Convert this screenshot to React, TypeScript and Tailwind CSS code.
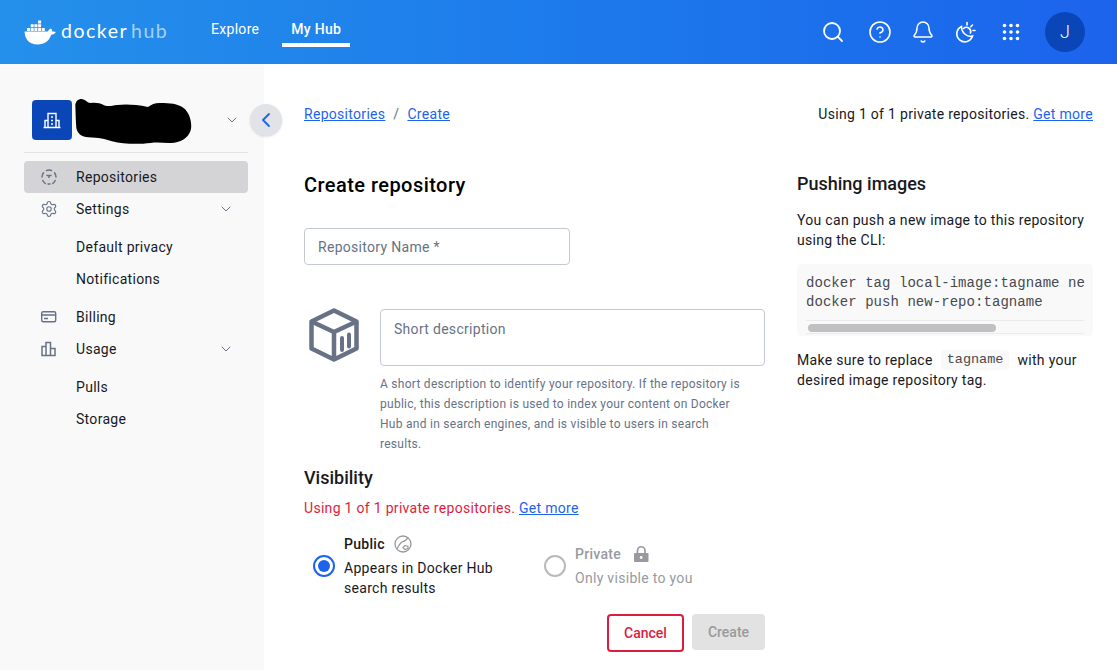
import { Bell, ChevronDown, ChevronLeft, CircleHelp, Search, Settings } from "lucide-react"
import { ReactNode } from "react"

function DockerWhale() {
	return (
		<svg className="h-[26px] w-[32px]" viewBox="0 0 32 26" fill="#fff">
			<path d="M0.6 12.6h23.2c.5-1.6 2-2.6 2.5-2.8l.7-.4c.9 1 1.3 2.2 1.2 3.2 1.1-.3 2.4-.2 3.6.5-1 2-3 2.7-4.6 2.6C25.4 21.6 20.800 25.500 13.500 25.500 5.500 25.500 .6 20.500 .6 12.600z" />
			<path d="M3 9h3v3H3zM6.700 9h3v3h-3zM10.400 9h3v3h-3zM14.100 9h3v3h-3zM17.800 9h3v3h-3zM6.700 5.300h3v3h-3zM10.400 5.300h3v3h-3zM14.100 5.300h3v3h-3zM14.100 1.600h3v3h-3z" />
		</svg>
	)
}

function ThemeIcon() {
	return (
		<svg className="mr-[3px] -ml-[3px] h-6 w-6" viewBox="0 0 24 24" fill="none" stroke="#fff" strokeWidth="1.6" strokeLinecap="round">
			<path d="M9.500 6.500a8 8 0 1 0 11 9.500c-5 1.500-11-3-11-9.500z" />
			<path d="M11.500 8.500a4.300 4.300 0 0 1 7 4.500M15 2.500v2.500M20.500 5l-1.700 1.700M23 10.500h-2" />
		</svg>
	)
}

function AppsIcon() {
	return (
		<svg className="h-6 w-6" viewBox="0 0 24 24" fill="#fff">
			{[5.5, 12, 18.5].flatMap((y) => [5.5, 12, 18.5].map((x) => <circle key={`${x}-${y}`} cx={x} cy={y} r="1.800" />))}
		</svg>
	)
}

function TopBar() {
	return (
		<div className="flex h-16 shrink-0 items-center bg-gradient-to-r from-[#2590ea] to-[#1c63ec] pr-8 pl-6 text-white">
			<div className="flex w-[164px] items-center gap-[5px]">
				<DockerWhale />
				<span className="-mt-[2px] font-['Lato'] text-[19.5px] leading-none font-normal tracking-[1.5px]">
					docker<span className="ml-[3px] opacity-60">hub</span>
				</span>
			</div>
			<div className="-mt-[6px] ml-[23px] flex items-center gap-[32px] text-sm tracking-[0.3px]">
				<span>Explore</span>
				<span className="relative font-medium">
					My Hub
					<span className="absolute -right-[9px] -bottom-[8px] -left-[9px] h-1 bg-white" />
				</span>
			</div>
			<div className="ml-auto flex items-center gap-5">
				<Search className="mr-[3px] -ml-[3px] h-6 w-6" strokeWidth={1.800} />
				<CircleHelp className="h-6 w-6" strokeWidth={1.600} />
				<Bell className="-ml-[1px] h-6 w-6" strokeWidth={1.500} />
				<ThemeIcon />
				<AppsIcon />
				<div className="ml-[2px] flex h-10 w-10 items-center justify-center rounded-full bg-[#0b46b8] text-lg font-light">J</div>
			</div>
		</div>
	)
}

function RepoIcon() {
	return (
		<svg className="h-[18px] w-[18px]" viewBox="0 0 18 18" fill="none" stroke="#677285" strokeWidth="1.500" strokeLinecap="round">
			<path d="M6.500 2.500A7 7 0 0 1 11.500 2.500M2 9a7 7 0 0 1 1.500-4.200M14.500 4.800A7 7 0 0 1 16 9M2.800 12.500a7 7 0 0 0 2.500 3M12.700 15.500a7 7 0 0 0 2.500-3M8 16h2" />
			<path d="M7 7.500h4M9 7.500v2" />
		</svg>
	)
}

function BillingIcon() {
	return (
		<svg className="h-[18px] w-[18px]" viewBox="0 0 18 18" fill="none" stroke="#677285" strokeWidth="1.400">
			<rect x="1.700" y="3.700" width="14" height="10" rx="1.500" />
			<path d="M1.700 7h14M4 10.500h4" />
		</svg>
	)
}

function UsageIcon() {
	return (
		<svg className="h-[18px] w-[18px]" viewBox="0 0 18 18" fill="none" stroke="#677285" strokeWidth="1.500">
			<path d="M2 6.500h4v9H2zM6 2.500h4.500v13H6zM10.500 8.500H15v7h-4.500z" />
		</svg>
	)
}

function NavRow({ icon, label, active, caret }: { icon?: ReactNode; label: string; active?: boolean; caret?: boolean }) {
	return (
		<div className={`flex h-8 items-center rounded pr-[14px] pl-4 ${active ? "bg-[#d4d4d6]" : ""}`}>
			<div className="flex w-9 items-center">{icon}</div>
			<span className="flex-1 text-sm tracking-[0.3px] text-[#17191e]">{label}</span>
			{caret && <ChevronDown className="h-4 w-4 text-[#677285]" strokeWidth={1.500} />}
		</div>
	)
}

function Sidebar() {
	return (
		<div className="relative w-[264px] shrink-0 bg-[#f9f9fa] pt-9 pr-4 pl-6">
			<div className="flex h-[53px] items-start border-b border-[#e4e5e8] pl-2">
				<div className="flex h-10 w-10 items-center justify-center rounded bg-[#0b46b8]">
					<svg className="h-5 w-5" viewBox="0 0 20 20" fill="none" stroke="#fff" strokeWidth="1.400">
						<path d="M1.500 17.500h17M3 17.500v-7h3M17 17.500v-7h-3M6 17.500V3.500h8v14M9 7h2M9 10.500h2M9 14h2" />
					</svg>
				</div>
				{/* name is scribbled out in the screenshot */}
				<svg className="-mt-[2px] ml-[3px] h-[46px] w-[117px] shrink-0" viewBox="45 25 348 138" preserveAspectRatio="none" fill="#000">
					<path d="M46 50C45 32 60 24 72 30C80 34 84 40 92 40C105 38 120 40 130 46C140 52 155 48 170 46C195 43 225 44 262 52C272 44 285 39 300 40C325 40 352 42 368 55C385 68 393 95 390 118C385 140 368 155 340 159C315 162 295 156 270 160C235 164 190 164 155 155C135 148 115 144 85 143C65 142 52 132 49 115C47 95 47 70 46 50Z" />
				</svg>
				<ChevronDown className="mt-3 ml-[32px] h-4 w-4 shrink-0 text-[#677285]" strokeWidth={1.500} />
			</div>
			<div className="mt-2 flex flex-col">
				<NavRow active icon={<RepoIcon />} label="Repositories" />
				<NavRow caret icon={<Settings className="h-[18px] w-[18px] text-[#677285]" strokeWidth={1.500} />} label="Settings" />
				<div className="my-[6px]">
					<NavRow label="Default privacy" />
					<NavRow label="Notifications" />
				</div>
				<NavRow icon={<BillingIcon />} label="Billing" />
				<NavRow caret icon={<UsageIcon />} label="Usage" />
				<div className="mt-[6px]">
					<NavRow label="Pulls" />
					<NavRow label="Storage" />
				</div>
			</div>
			<button className="absolute top-10 left-[250px] flex h-8 w-8 items-center justify-center rounded-full bg-[#e2e3e8] shadow-sm">
				<ChevronLeft className="h-6 w-6 text-[#1d63ed]" strokeWidth={1.800} />
			</button>
		</div>
	)
}

function BoxIcon() {
	return (
		<svg className="h-[54px] w-[50px]" viewBox="0 0 50 54" fill="none" stroke="#677285" strokeWidth="4.500" strokeLinejoin="round">
			<path d="M25 2.500 47.500 13.500v27L25 51.500 2.500 40.500v-27z" />
			<path d="M2.500 13.500 25 24l22.500-10.500M25 24v27.500" />
			<path d="M33 30v12M40 26.500v12" strokeWidth="4" strokeLinecap="round" />
		</svg>
	)
}

function Form() {
	return (
		<div className="w-[461px] shrink-0">
			<h1 className="mt-[47px] text-[20px] leading-[28px] font-medium tracking-[0.45px] text-black">Create repository</h1>
			<div className="mt-[29px] flex h-[37px] w-[266px] items-center rounded border border-[#c4c8d1] px-[13px] text-sm tracking-[0.3px] text-[#677285]">
				Repository Name *
			</div>
			<div className="mt-[44px] flex">
				<div className="-mt-[1px] w-[76px] pl-[5px]">
					<BoxIcon />
				</div>
				<div className="flex-1">
					<div className="h-[57px] rounded border border-[#c4c8d1] px-[13px] py-[9px] text-sm leading-5 tracking-[0.3px] text-[#677285]">
						Short description
					</div>
					<p className="mt-2 pr-5 text-xs leading-5 tracking-[0.27px] text-[#677285]">
						A short description to identify your repository. If the repository is public, this description is used to index your content on Docker Hub and in search engines, and is visible to users in search results.
					</p>
				</div>
			</div>
			<h2 className="mt-[12px] text-lg leading-6 font-medium text-[#17191e]">Visibility</h2>
			<p className="mt-[8px] text-sm leading-5 tracking-[0.3px] text-[#dc1e3c]">
				Using 1 of 1 private repositories. <span className="text-[#1d63ed] underline">Get more</span>
			</p>
			<div className="mt-[16px] flex items-center pl-[9px]">
				<div className="flex w-[231px] items-center">
					<div className="flex h-[22px] w-[22px] items-center justify-center rounded-full border-2 border-[#1d63ed]">
						<div className="h-3 w-3 rounded-full bg-[#1d63ed]" />
					</div>
					<div className="ml-[9px] text-sm leading-5 tracking-[0.3px] text-[#17191e]">
						<div className="flex items-center gap-[9px] font-medium">
							Public
							<svg className="h-[18px] w-[18px]" viewBox="0 0 18 18" fill="none" stroke="#989a9e" strokeWidth="1.300">
								<circle cx="9" cy="9" r="8" />
								<path d="M3 14c2-4 3-6 5-7 3-1 5-2 6-5M11 10.500l3 1v2l-3 1-2-2z" />
							</svg>
						</div>
						<div className="mt-1 w-[160px]">Appears in Docker Hub search results</div>
					</div>
				</div>
				<div className="flex items-center">
					<div className="h-[22px] w-[22px] rounded-full border-2 border-[#b8b9bb]" />
					<div className="ml-[9px] text-sm leading-5 tracking-[0.3px] text-[#989a9e]">
						<div className="flex items-center gap-[11px] font-medium">
							Private
							<svg className="h-[18px] w-[18px]" viewBox="0 0 18 18" fill="#989a9e">
								<path d="M3 8h12.500a1 1 0 0 1 1 1v7a1 1 0 0 1-1 1H3a1 1 0 0 1-1-1V9a1 1 0 0 1 1-1z" />
								<path d="M5.500 8V5.500a3.700 3.700 0 0 1 7.500 0V8" fill="none" stroke="#989a9e" strokeWidth="1.700" />
								<circle cx="9.200" cy="12.500" r="1.400" fill="#fff" />
							</svg>
						</div>
						<div className="mt-1">Only visible to you</div>
					</div>
				</div>
			</div>
			<div className="mt-4 flex justify-end gap-2">
				<button className="h-[38px] w-[77px] rounded border-2 border-[#dc1e3c] text-sm font-medium text-[#dc1e3c]">Cancel</button>
				<button className="h-9 w-[73px] rounded bg-[#e2e2e2] text-sm font-medium text-[#989a9e]">Create</button>
			</div>
		</div>
	)
}

function PushHelp() {
	return (
		<div className="ml-[32px] w-[296px] shrink-0 text-sm leading-5 tracking-[0.3px] text-[#17191e]">
			<h2 className="mt-[48px] text-lg leading-6 font-medium tracking-normal">Pushing images</h2>
			<p className="mt-[14px]">You can push a new image to this repository using the CLI:</p>
			<div className="mt-[14px] h-[72px] overflow-hidden rounded bg-[#f9f9fa] px-[9px] pt-[10px] font-['Liberation_Mono',monospace] leading-[19px] tracking-[0.05px] text-[#47494f]">
				<div className="whitespace-nowrap">docker tag local-image:tagname ne</div>
				<div className="whitespace-nowrap">docker push new-repo:tagname</div>
				<div className="mt-[8px] h-[14px] border-t border-b border-[#ebebed] pt-[3px]">
					<div className="ml-[2px] h-2 w-[188px] rounded bg-[#c0c0c2]" />
				</div>
			</div>
			<div className="mt-[14px]">
				<div className="flex items-center">
					<span>Make sure to replace</span>
					<code className="mx-2 h-5 rounded bg-[#f9f9fa] px-[6px] font-['Liberation_Mono',monospace] text-[13.5px] leading-5 tracking-normal text-[#47494f]">tagname</code>
					<span>with your</span>
				</div>
				<div>desired image repository tag.</div>
			</div>
		</div>
	)
}

export default function App() {
	return (
		<div className="flex h-screen flex-col overflow-hidden bg-white font-['Roboto',sans-serif]">
			<TopBar />
			<div className="flex flex-1 overflow-hidden">
				<Sidebar />
				<div className="flex-1 pr-6 pl-10">
					<div className="mt-10 flex h-5 items-center justify-between text-sm tracking-[0.3px] text-[#17191e]">
						<div className="flex items-center gap-2">
							<span className="text-[#1d63ed] underline">Repositories</span>
							<span className="text-[#677285]">/</span>
							<span className="text-[#1d63ed] underline">Create</span>
						</div>
						<div>
							Using 1 of 1 private repositories. <span className="text-[#1d63ed] underline">Get more</span>
						</div>
					</div>
					<div className="flex">
						<Form />
						<PushHelp />
					</div>
				</div>
			</div>
		</div>
	)
}
